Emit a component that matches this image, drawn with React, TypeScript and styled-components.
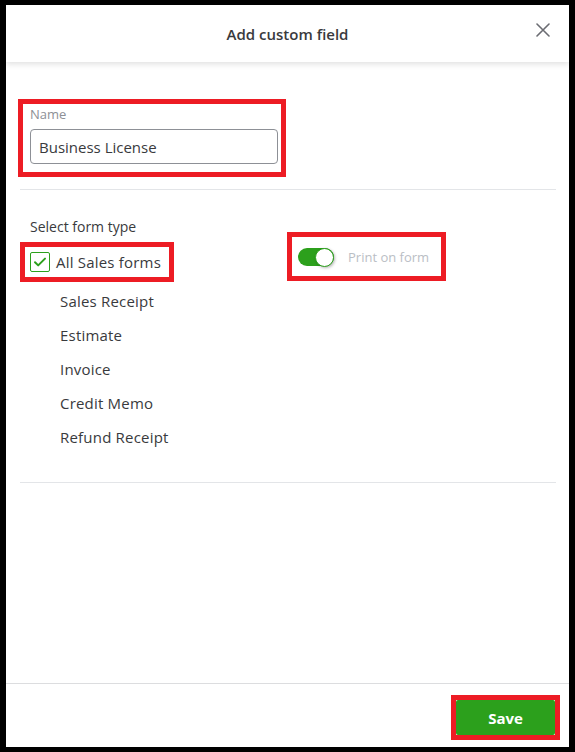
import React, { useState } from 'react';
import styled, { createGlobalStyle } from 'styled-components';

const GREEN = '#2ca01c';
const INK = '#393a3d';

const Global = createGlobalStyle`
  html, body { margin: 0; padding: 0; background: #fff; }
  body { font-family: "Open Sans", "Liberation Sans", sans-serif; color: ${INK}; }
  * { box-sizing: border-box; }
`;

const salesForms = ['Sales Receipt', 'Estimate', 'Invoice', 'Credit Memo', 'Refund Receipt'];

const App: React.FC = () => {
  const [name, setName] = useState('Business License');
  const [allSales, setAllSales] = useState(true);
  const [printOn, setPrintOn] = useState(true);

  return (
    <S.Frame>
      <Global />
      <S.Header>
        <S.Title>Add custom field</S.Title>
        <S.Close aria-label="Close">
          <svg width="14" height="14" viewBox="0 0 14 14">
            <path d="M1 1L13 13M13 1L1 13" stroke="#6b6c72" strokeWidth="1.6" strokeLinecap="round" />
          </svg>
        </S.Close>
      </S.Header>

      <S.Body>
        <S.NameSection>
          <S.Marked $t={7} $r={8} $b={13} $l={12}>
            <S.Field>
              <S.FieldLabel>Name</S.FieldLabel>
              <S.Input value={name} onChange={(e) => setName(e.target.value)} />
            </S.Field>
          </S.Marked>
        </S.NameSection>

        <S.FormSection>
          <S.Column>
            <S.SectionLabel>Select form type</S.SectionLabel>
            <S.Marked $t={10} $r={13} $b={10} $l={10}>
              <S.CheckRow onClick={() => setAllSales(!allSales)}>
                <S.CheckBox>
                  {allSales && (
                    <svg width="14" height="14" viewBox="0 0 14 14">
                      <path d="M2 7.2l3.2 3.2L12 3.6" fill="none" stroke={GREEN} strokeWidth="2" strokeLinecap="round" strokeLinejoin="round" />
                    </svg>
                  )}
                </S.CheckBox>
                <S.CheckText>All Sales forms</S.CheckText>
              </S.CheckRow>
            </S.Marked>
            <S.FormList>
              {salesForms.map((f) => (
                <S.FormItem key={f}>{f}</S.FormItem>
              ))}
            </S.FormList>
          </S.Column>

          <S.ToggleColumn>
            <S.Marked $t={15} $r={17} $b={14} $l={11}>
              <S.ToggleRow onClick={() => setPrintOn(!printOn)}>
                <S.Track $on={printOn}>
                  <S.Knob $on={printOn} />
                </S.Track>
                <S.ToggleText>Print on form</S.ToggleText>
              </S.ToggleRow>
            </S.Marked>
          </S.ToggleColumn>
        </S.FormSection>
      </S.Body>

      <S.Footer>
        <S.Marked $t={5} $r={5} $b={5} $l={5}>
          <S.SaveButton>Save</S.SaveButton>
        </S.Marked>
      </S.Footer>
    </S.Frame>
  );
};

export default App;

const S = {
  Frame: styled.div`
    width: 575px;
    height: 752px;
    border-style: solid;
    border-color: #000;
    border-width: 5px 6px 5px 6px;
    display: flex;
    flex-direction: column;
    background: #fff;
  `,
  Header: styled.div`
    height: 57px;
    display: flex;
    align-items: center;
    justify-content: center;
    position: relative;
    z-index: 1;
    background: #fff;
    box-shadow: 0 2px 6px rgba(0, 0, 0, 0.13);
  `,
  Title: styled.div`
    font-size: 15px;
    font-weight: 600;
    color: ${INK};
    padding-top: 1px;
  `,
  Close: styled.button`
    position: absolute;
    right: 19px;
    top: 18px;
    padding: 0;
    border: 0;
    background: none;
    width: 14px;
    height: 14px;
    display: flex;
    cursor: pointer;
  `,
  Body: styled.div`
    flex: 1;
    padding: 0 13px 0 14px;
  `,
  NameSection: styled.div`
    padding: 44px 10px 25px;
    border-bottom: 1px solid #e3e5e8;
  `,
  Marked: styled.div<{ $t: number; $r: number; $b: number; $l: number }>`
    position: relative;
    display: flex;
    width: fit-content;
    &::after {
      content: '';
      position: absolute;
      top: ${(p) => -p.$t}px;
      right: ${(p) => -p.$r}px;
      bottom: ${(p) => -p.$b}px;
      left: ${(p) => -p.$l}px;
      border: 5px solid #ed1c24;
      pointer-events: none;
      z-index: 2;
    }
  `,
  Field: styled.label`
    display: flex;
    flex-direction: column;
    gap: 7px;
    width: 248px;
  `,
  FieldLabel: styled.span`
    font-size: 13px;
    line-height: 16px;
    color: #8d9096;
  `,
  Input: styled.input`
    height: 35px;
    width: 100%;
    border: 1px solid #8d9096;
    border-radius: 4px;
    padding: 0 8px;
    font-family: inherit;
    font-size: 15px;
    color: ${INK};
    outline: none;
  `,
  FormSection: styled.div`
    display: flex;
    padding: 27px 10px 28px;
    border-bottom: 1px solid #e3e5e8;
  `,
  Column: styled.div`
    width: 268px;
    display: flex;
    flex-direction: column;
  `,
  SectionLabel: styled.div`
    font-size: 14px;
    line-height: 20px;
    color: ${INK};
    margin-bottom: 15px;
  `,
  CheckRow: styled.div`
    display: flex;
    align-items: center;
    gap: 6px;
    height: 20px;
    cursor: pointer;
  `,
  CheckBox: styled.span`
    width: 20px;
    height: 20px;
    border: 1px solid ${GREEN};
    border-radius: 2px;
    display: flex;
    align-items: center;
    justify-content: center;
  `,
  CheckText: styled.span`
    font-size: 15px;
    line-height: 20px;
    color: ${INK};
    letter-spacing: 0.2px;
  `,
  FormList: styled.ul`
    list-style: none;
    margin: 12px 0 0;
    padding: 0 0 0 30px;
  `,
  FormItem: styled.li`
    font-size: 15px;
    line-height: 34px;
    color: ${INK};
    letter-spacing: 0.2px;
  `,
  ToggleColumn: styled.div`
    padding-top: 30px;
  `,
  ToggleRow: styled.div`
    display: flex;
    align-items: center;
    gap: 14px;
    cursor: pointer;
  `,
  Track: styled.span<{ $on: boolean }>`
    width: 36px;
    height: 18px;
    border-radius: 9px;
    background: ${(p) => (p.$on ? GREEN : '#babec5')};
    display: flex;
    align-items: center;
    justify-content: ${(p) => (p.$on ? 'flex-end' : 'flex-start')};
  `,
  Knob: styled.span<{ $on: boolean }>`
    width: 19px;
    height: 19px;
    border-radius: 50%;
    background: #fff;
    border: 1px solid ${(p) => (p.$on ? GREEN : '#babec5')};
    box-shadow: 1px 1px 3px rgba(0, 0, 0, 0.3);
  `,
  ToggleText: styled.span`
    font-size: 13px;
    line-height: 20px;
    color: #babec5;
  `,
  Footer: styled.div`
    height: 64px;
    border-top: 1px solid #dcdddf;
    display: flex;
    justify-content: flex-end;
    align-items: flex-start;
    padding: 16px 14px 0;
  `,
  SaveButton: styled.button`
    width: 99px;
    height: 35px;
    border: 0;
    border-radius: 2px;
    background: ${GREEN};
    color: #fff;
    font-family: inherit;
    font-size: 15px;
    font-weight: 700;
    cursor: pointer;
  `,
};
